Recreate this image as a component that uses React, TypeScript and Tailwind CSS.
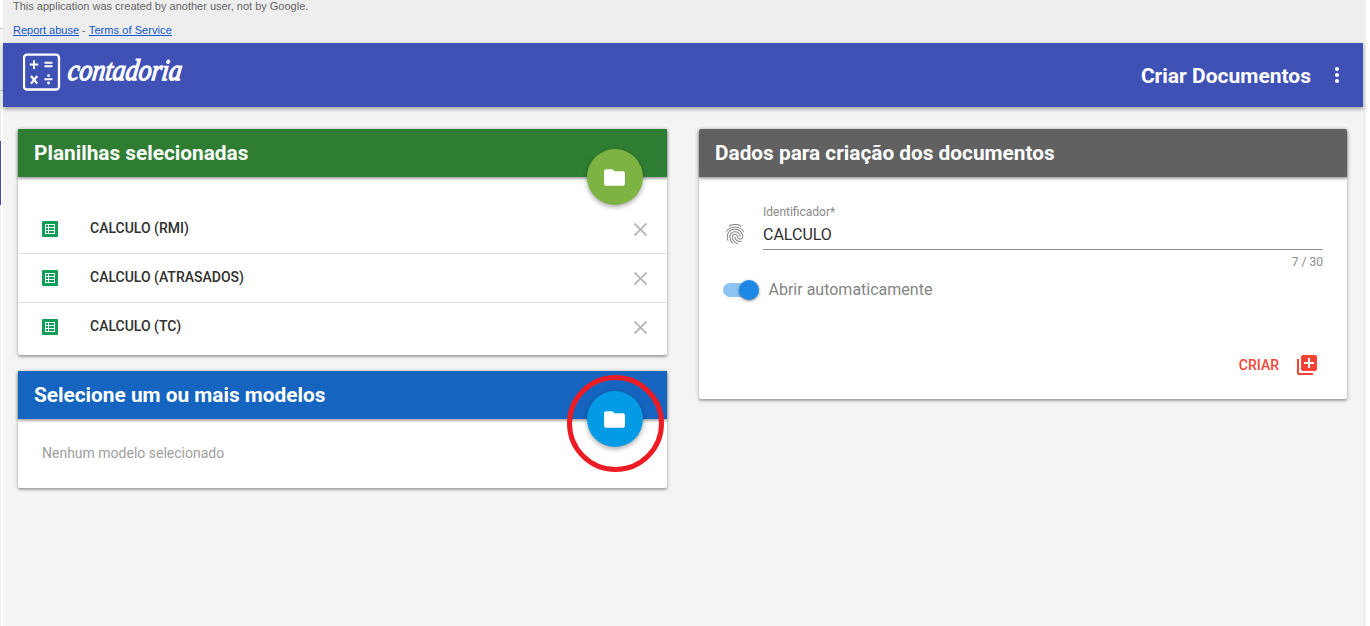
import { MdFolder, MdMoreVert, MdClose, MdLibraryAdd, MdFingerprint } from "react-icons/md";

const shadow = "shadow-[0_2px_2px_0_rgba(0,0,0,0.2),0_1px_4px_0_rgba(0,0,0,0.24)]";

function Logo() {
  return (
    <div className="flex items-start">
      <svg width="38" height="40" viewBox="0 0 38 40" fill="none">
        <rect x="1" y="2.7" width="35" height="34.8" rx="3" stroke="white" strokeWidth="2.3" />
        <path d="M6.7 12.5h8.6M11 8.3v8.6M21.5 10.8h8M21.5 14.2h8M21.5 27.3h8" stroke="white" strokeWidth="1.9" />
        <path d="M8 24l6.2 7.6M14.2 24l-6.2 7.6" stroke="white" strokeWidth="2.2" />
        <circle cx="25.5" cy="23.6" r="1.4" fill="white" />
        <circle cx="25.5" cy="31" r="1.4" fill="white" />
      </svg>
      <span className="mt-[1px] ml-[7px] origin-center -skew-x-8 scale-y-115 font-['Liberation_Serif',serif] text-[26px] leading-9 italic [-webkit-text-stroke:1.1px_white]">
        contadoria
      </span>
    </div>
  );
}

function SheetIcon() {
  return (
    <svg width="16" height="16" viewBox="0 0 16 16">
      <rect width="16" height="16" rx="1" fill="#0f9d58" />
      <path
        fill="white"
        fillRule="evenodd"
        d="M3 3h10v10H3zM4 4v2h2V4zM7 4v2h5V4zM4 7v2h2V7zM7 7v2h5V7zM4 10v2h2v-2zM7 10v2h5v-2z"
      />
    </svg>
  );
}

function CardHeader({ title, color }: { title: string; color: string }) {
  return (
    <div className={`relative flex h-12 items-center pl-4 text-[20.8px] leading-8 font-bold text-white ${color} ${shadow}`}>
      <h2>{title}</h2>
    </div>
  );
}

function FolderButton({ color }: { color: string }) {
  return (
    <button
      className={`absolute top-5 right-6 flex size-14 items-center justify-center rounded-full pr-px text-white shadow-[0_2px_5px_0_rgba(0,0,0,0.36)] ${color}`}
    >
      <MdFolder size={25} />
    </button>
  );
}

const sheets = ["CALCULO (RMI)", "CALCULO (ATRASADOS)", "CALCULO (TC)"];

export default function App() {
  return (
    <div className="flex h-[626px] w-[1370px] overflow-hidden bg-white font-[Roboto,sans-serif]">
      <div className="flex w-[3px] shrink-0 flex-col">
        <div className="h-7 bg-white" />
        <div className="h-[63px] border-y border-[#c4c4c4] bg-[#f5f5f5]" />
        <div className="h-[50px] w-px bg-[#e8e8e8]" />
        <div className="h-16 w-px bg-[#3f51b5]" />
        <div className="w-px flex-1 bg-[#f0f0f0]" />
      </div>

      <div className="flex w-[1360px] flex-col bg-[#f4f4f4]">
        <div className="h-[43px] bg-[#eeeeee] pl-[10px] font-['Liberation_Sans',sans-serif] text-[11px] text-[#666666]">
          <p className="h-6 leading-[13px]">This application was created by another user, not by Google.</p>
          <p className="leading-[13px]">
            <a className="text-[#1155cc] underline">Report abuse</a> -{" "}
            <a className="tracking-[0.07px] text-[#1155cc] underline">Terms of Service</a>
          </p>
        </div>

        <header className="relative flex h-16 items-start bg-[#3f51b5] pr-[14px] pl-5 text-white shadow-[0_2px_4px_0_rgba(0,0,0,0.35)]">
          <div className="pt-[9px]">
            <Logo />
          </div>
          <h1 className="mt-[18px] ml-auto text-[21px] leading-[30px] font-bold">Criar Documentos</h1>
          <MdMoreVert size={24} className="mt-5 ml-[14px]" />
        </header>

        <main className="flex items-start gap-8 pt-[22px] pl-[15px]">
          <div className="flex w-[649px] flex-col gap-4">
            <section className={`relative h-[226px] rounded-[2px] bg-white ${shadow}`}>
              <CardHeader title="Planilhas selecionadas" color="bg-[#2e7d32]" />
              <FolderButton color="bg-[#7cb342]" />
              <ul className="pt-7">
                {sheets.map((name) => (
                  <li
                    key={name}
                    className="flex h-[49px] items-start border-b border-[#e0e0e0] pr-[15px] pl-6 text-[14px] font-medium text-[#303030] last:border-b-0"
                  >
                    <span className="mt-4">
                      <SheetIcon />
                    </span>
                    <span className="mt-[13px] ml-8 leading-5">{name}</span>
                    <MdClose size={23} className="mt-[12.5px] ml-auto text-[#b8b8b8]" />
                  </li>
                ))}
              </ul>
            </section>

            <section className={`relative h-[117px] rounded-[2px] bg-white ${shadow}`}>
              <CardHeader title="Selecione um ou mais modelos" color="bg-[#1565c0]" />
              <FolderButton color="bg-[#039be5]" />
              <p className="pt-6 pl-6 text-[14px] leading-5 text-[#9e9e9e]">Nenhum modelo selecionado</p>
              <div className="absolute top-1 right-[3px] size-[97px] rounded-full border-[5px] border-[#ed1c24]" />
            </section>
          </div>

          <section className={`h-[270px] w-[648px] rounded-[2px] bg-white ${shadow}`}>
            <CardHeader title="Dados para criação dos documentos" color="rounded-t-[2px] bg-[#616161]" />
            <div className="flex pt-[27px] pr-6 pl-[23.5px]">
              <MdFingerprint size={24} className="mt-[18px] mr-[16.5px] text-[#858585]" />
              <div className="flex-1">
                <label className="block pt-px text-[12px] leading-[15px] text-[#8a8a8a]">Identificador*</label>
                <div className="h-[30px] border-b border-[#8c8c8c] pt-[5px] text-[16px] leading-5 text-[#303030]">CALCULO</div>
                <div className="pt-[5px] text-right text-[12px] leading-[15px] text-[#8a8a8a]">7 / 30</div>
              </div>
            </div>
            <div className="mt-[10px] flex h-5 items-center pl-6">
              <div className="relative h-[14px] w-[34px] rounded-full bg-[#8ec4f2]">
                <span className="absolute -top-[3px] -right-[2px] size-5 rounded-full bg-[#1e88e5] shadow-[0_1px_3px_rgba(0,0,0,0.5)]" />
              </div>
              <span className="ml-[11.5px] text-[16px] text-[#858585]">Abrir automaticamente</span>
            </div>
            <div className="mt-[53px] flex h-6 items-center justify-end pr-7 text-[#f44336]">
              <span className="mr-4 text-[14px] font-medium">CRIAR</span>
              <MdLibraryAdd size={24} />
            </div>
          </section>
        </main>
      </div>
      <div className="w-[3px] bg-[#eeeeee]" />
    </div>
  );
}
